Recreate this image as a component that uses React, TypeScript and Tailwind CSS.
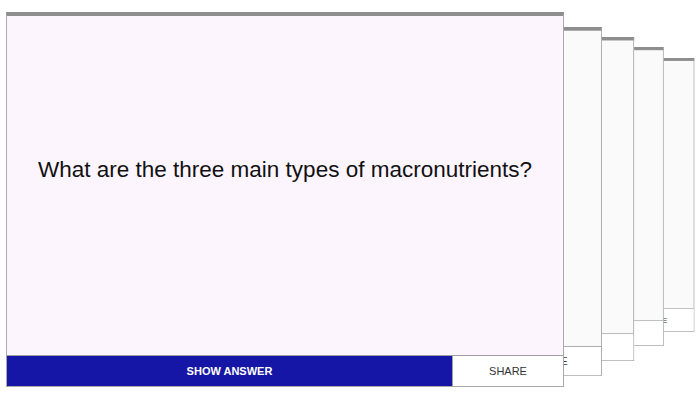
import React from "react";

type CardProps = {
  className: string;
  front?: boolean;
};

function Card({ className, front }: CardProps) {
  return (
    <div
      className={`absolute w-[558px] h-[375px] flex flex-col border-x border-b border-t-4 border-x-[#a9a9a9] border-b-[#aaaaaa] border-t-[#8e8e8e] origin-top-left ${
        front ? "bg-[#fcf5fd]" : "bg-[#fafafa]"
      } ${className}`}
    >
      <div className="flex-1 flex items-center justify-center pb-[31px]">
        {front && (
          <p className="text-[22.5px] text-[#111111] font-['Liberation_Sans',Arial,sans-serif]">
            What are the three main types of macronutrients?
          </p>
        )}
      </div>
      <div className="h-[31px] flex border-t border-t-[#a0a0a0] font-['Liberation_Sans',Arial,sans-serif] text-[11px]">
        <div className="w-[445px] bg-[#1616a6] flex items-center justify-center text-white font-bold">
          SHOW ANSWER
        </div>
        <div className="flex-1 bg-white border-l border-l-[#a0a0a0] flex items-center justify-center text-[#333333]">
          SHARE
        </div>
      </div>
    </div>
  );
}

export default function App() {
  return (
    <div className="relative w-[700px] h-[400px] bg-white overflow-hidden">
      <Card className="left-[287px] top-[58px] scale-[0.73]" />
      <Card className="left-[219px] top-[47px] scale-[0.797]" />
      <Card className="left-[152px] top-[37px] scale-[0.864]" />
      <Card className="left-[83px] top-[27px] scale-[0.93]" />
      <Card className="left-[6px] top-[12px]" front />
    </div>
  );
}
